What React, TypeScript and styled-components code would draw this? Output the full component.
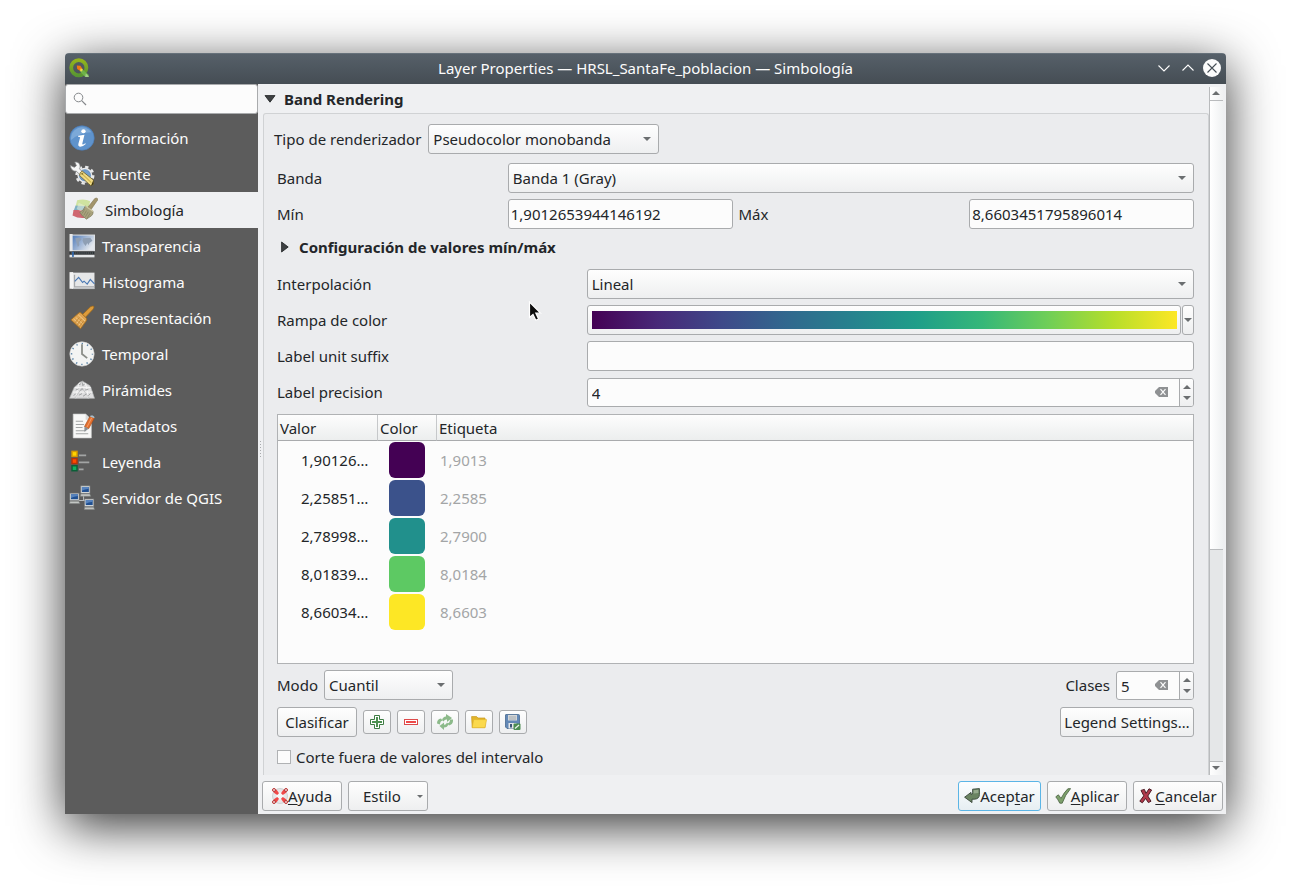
import React from 'react';
import styled, { createGlobalStyle, css } from 'styled-components';

const GlobalStyle = createGlobalStyle`
  *, *::before, *::after { box-sizing: border-box; }
  body { margin: 0; background: #ffffff; }
  body, button, input, select, table {
    font-family: 'Noto Sans', 'Open Sans', sans-serif;
    font-size: 15px;
    line-height: 20px;
    color: #232629;
  }
  button, input, select { margin: 0; padding: 0; }
`;

/* ---------- window frame ---------- */

const Desktop = styled.div`
  display: flex;
  min-height: 100vh;
  padding: 53px 65px 77px;
`;

const Dialog = styled.div`
  display: flex;
  flex: 1;
  flex-direction: column;
  min-width: 0;
  overflow: hidden;
  border-radius: 4px 4px 0 0;
  background: #eff0f2;
  box-shadow: 0 12px 50px rgba(0, 0, 0, 0.8);
`;

const TitleBar = styled.header`
  display: grid;
  grid-template-columns: 1fr auto 1fr;
  align-items: center;
  height: 31px;
  padding: 0 4px 2px;
  border-top: 1px solid #66717a;
  background: linear-gradient(#566069, #454d54);
`;

const Title = styled.h1`
  margin: 0;
  font-size: 15px;
  font-weight: 400;
  color: #fcfcfc;
`;

const WindowControls = styled.div`
  display: flex;
  justify-content: flex-end;
  gap: 4px;
`;

const WindowButton = styled.button`
  display: flex;
  border: 0;
  background: none;
`;

const Columns = styled.div`
  display: flex;
  flex: 1;
`;

/* ---------- side navigation ---------- */

const Sidebar = styled.nav`
  width: 193px;
  flex: none;
  background: #5c5c5c;
`;

const SearchBox = styled.label`
  display: flex;
  align-items: center;
  gap: 6px;
  height: 30px;
  padding: 0 7px;
  border: 1px solid #a9abad;
  border-radius: 3px;
  background: #fcfcfc;
`;

const SearchInput = styled.input`
  flex: 1;
  min-width: 0;
  border: 0;
  outline: 0;
  background: none;
`;

const NavList = styled.ul`
  margin: 0;
  padding: 6px 0;
  list-style: none;
`;

const NavLink = styled.a<{ $active?: boolean }>`
  display: flex;
  align-items: center;
  gap: 7px;
  height: 36px;
  padding: 0 4px;
  color: #fcfcfc;
  text-decoration: none;
  ${(p) =>
    p.$active &&
    css`
      padding: 0 7px;
      background: #eff0f2;
      color: #232629;
    `}
`;

/* ---------- main area ---------- */

const Splitter = styled.div`
  display: flex;
  flex: none;
  align-items: center;
  width: 5px;
  padding-left: 1px;
`;

const Main = styled.main`
  display: flex;
  flex: 1;
  flex-direction: column;
  min-width: 0;
  padding: 3px 3px 3px 0;
`;

const ScrollArea = styled.div`
  position: relative;
  display: flex;
  flex: 1;
`;

const Group = styled.section`
  display: flex;
  flex: 1;
  flex-direction: column;
  min-width: 0;
`;

const GroupHeader = styled.h2`
  display: flex;
  align-items: center;
  gap: 8px;
  height: 26px;
  margin: 0;
  padding-bottom: 2px;
  font-size: 15px;
  font-weight: 700;
`;

const GroupBody = styled.div`
  flex: 1;
  border: 1px solid #d0d2d4;
  border-bottom: 0;
  border-radius: 3px 3px 0 0;
  background: #ebecee;
`;

const RendererRow = styled.div`
  display: flex;
  align-items: center;
  gap: 7px;
  padding: 10px 10px 9px;
`;

const Form = styled.div`
  display: flex;
  flex-direction: column;
  gap: 6px;
  padding: 0 14px 0 13px;
`;

const QuarterRow = styled.div`
  display: grid;
  grid-template-columns: repeat(4, minmax(0, 1fr));
  align-items: center;
  gap: 6px;
`;

const ThirdRow = styled.div`
  display: grid;
  grid-template-columns: minmax(0, 1fr) minmax(0, 2fr);
  align-items: center;
  gap: 6px;
  min-height: 30px;
`;

const SubHeader = styled.h3`
  display: flex;
  align-items: center;
  gap: 8px;
  height: 28px;
  margin: 0;
  padding: 0 1px 4px;
  font-size: 15px;
  font-weight: 700;
`;

const Disclosure = styled.button`
  display: flex;
  align-items: center;
  justify-content: center;
  width: 13px;
  height: 20px;
  border: 0;
  background: none;
`;

/* ---------- controls ---------- */

const raised = css`
  border: 1px solid #a9abad;
  border-radius: 3px;
  background: linear-gradient(#fefefe, #eeeff0);
`;

const Combo = styled.span<{ $width?: number; $span?: number }>`
  position: relative;
  display: block;
  width: ${(p) => (p.$width ? `${p.$width}px` : 'auto')};
  grid-column: ${(p) => (p.$span ? `span ${p.$span}` : 'auto')};
`;

const Select = styled.select`
  ${raised}
  display: block;
  width: 100%;
  height: 30px;
  padding: 0 20px 0 4px;
  appearance: none;
`;

const ComboArrow = styled.span`
  position: absolute;
  top: 13px;
  right: 8px;
  display: flex;
  pointer-events: none;
`;

const TextInput = styled.input`
  width: 100%;
  height: 30px;
  padding: 0 2px;
  border: 1px solid #a9abad;
  border-radius: 3px;
  background: #fcfcfc;
`;

const RampControl = styled.div`
  display: flex;
  gap: 1px;
`;

const RampButton = styled.button`
  ${raised}
  display: flex;
  flex: 1;
  height: 30px;
  padding: 5px 3px 5px 4px;
`;

const RampPreview = styled.span`
  flex: 1;
  height: 18px;
  background: linear-gradient(
    to right,
    #440154, #482878, #3e4989, #31688e, #26828e,
    #1f9e89, #35b779, #6ece58, #b5de2b, #fde725
  );
`;

const RampMenu = styled.button`
  ${raised}
  display: flex;
  align-items: center;
  justify-content: center;
  width: 12px;
  height: 30px;
`;

const SpinFrame = styled.div<{ $width?: number }>`
  display: flex;
  align-items: center;
  align-self: end;
  width: ${(p) => (p.$width ? `${p.$width}px` : 'auto')};
  height: 29px;
  overflow: hidden;
  border: 1px solid #a9abad;
  border-radius: 3px;
  background: #fcfcfc;
`;

const SpinInput = styled.input`
  flex: 1;
  min-width: 0;
  padding-left: 4px;
  border: 0;
  outline: 0;
  background: none;
`;

const ClearButton = styled.button`
  display: flex;
  margin-right: 11px;
  padding-bottom: 2px;
  border: 0;
  background: none;
`;

const SpinSteps = styled.div`
  display: flex;
  flex-direction: column;
  width: 14px;
  height: 100%;
  padding: 2px 0 3px;
  border-left: 1px solid #a9abad;
  background: linear-gradient(#fefefe, #eeeff0);
`;

const StepButton = styled.button`
  display: flex;
  flex: 1;
  align-items: center;
  justify-content: center;
  border: 0;
  background: none;
`;

const PushButton = styled.button<{ $default?: boolean; $min?: number }>`
  ${raised}
  display: flex;
  align-items: center;
  justify-content: center;
  min-width: ${(p) => p.$min ?? 80}px;
  height: 30px;
  padding: 0 3px;
  white-space: nowrap;
  ${(p) =>
    p.$default &&
    css`
      border-color: #5bb5e6;
      background: linear-gradient(#fcfeff, #e6eef2);
    `}
  u {
    text-underline-offset: 2px;
    text-decoration-thickness: 1px;
    text-decoration-skip-ink: none;
  }
`;

const MenuButton = styled(PushButton)`
  justify-content: space-between;
  padding: 0 4px 0 14px;
`;

const ToolButton = styled.button`
  ${raised}
  display: flex;
  align-items: center;
  justify-content: center;
  width: 28px;
  height: 24px;
`;

/* ---------- class table ---------- */

const TableFrame = styled.div`
  min-height: 250px;
  margin-top: 1px;
  border: 1px solid #b0b2b4;
  background: #fcfcfc;
`;

const ClassTable = styled.table`
  width: 100%;
  border-spacing: 0;
  table-layout: fixed;
`;

const HeadCell = styled.th<{ $width?: number }>`
  width: ${(p) => (p.$width ? `${p.$width}px` : 'auto')};
  height: 26px;
  padding: 0 2px;
  border-right: 1px solid #c6c8ca;
  border-bottom: 1px solid #a9abad;
  background: linear-gradient(#fdfdfd, #eceeee);
  font-weight: 400;
  text-align: left;
  &:last-child { border-right: 0; }
`;

const Cell = styled.td<{ $kind: 'value' | 'color' | 'label' }>`
  height: 38px;
  padding: ${(p) => ({ value: '0 0 0 23px', color: '0 0 0 11px', label: '0 3px' })[p.$kind]};
  color: ${(p) => (p.$kind === 'label' ? '#a3a5a6' : '#232629')};
`;

const Swatch = styled.button<{ $color: string }>`
  display: block;
  width: 36px;
  height: 36px;
  border: 0;
  border-radius: 6px;
  background: ${(p) => p.$color};
`;

/* ---------- rows under the table ---------- */

const Toolbar = styled.div`
  display: flex;
  align-items: center;
  gap: 6px;
`;

const Spacer = styled.span`
  flex: 1;
`;

const Actions = styled.div`
  display: flex;
  flex-direction: column;
  gap: 7px;
`;

const CheckRow = styled.label`
  display: flex;
  align-items: center;
  gap: 5px;
  height: 28px;
`;

const Check = styled.input`
  width: 14px;
  height: 14px;
  border: 1px solid #b0b2b4;
  background: #fcfcfc;
  appearance: none;
`;

const Footer = styled.footer`
  display: flex;
  gap: 6px;
  padding-top: 6px;
  margin-left: -1px;
`;

/* ---------- scroll bar ---------- */

const ScrollBar = styled.div`
  display: flex;
  flex: none;
  flex-direction: column;
  width: 14px;
  border-left: 1px solid #b9bbbd;
  background: #e5e7e8;
`;

const ScrollStep = styled.button`
  display: flex;
  align-items: center;
  justify-content: center;
  height: 13px;
  padding: 0 1px 1px 0;
  border: 0;
  background: linear-gradient(to right, #fefefe, #f0f1f2);
`;

const ScrollTrack = styled.div`
  display: flex;
  flex: 1;
  flex-direction: column;
  border: solid #b9bbbd;
  border-width: 1px 0;
`;

const ScrollThumb = styled.div`
  flex: 0 0 68%;
  border-bottom: 1px solid #b9bbbd;
  background: linear-gradient(to right, #ffffff, #eff1f2);
`;

const Pointer = styled.div`
  position: absolute;
  top: 214px;
  left: 265px;
  display: flex;
  pointer-events: none;
`;

/* ---------- drawings ---------- */

type TriDir = 'up' | 'down';
const Tri = ({ dir, w = 8, h = 4 }: { dir: TriDir; w?: number; h?: number }) => (
  <svg width={w} height={h} viewBox="0 0 8 4" preserveAspectRatio="none">
    <path d={dir === 'down' ? 'M0 0H8L4 4Z' : 'M0 4H8L4 0Z'} fill="#6b6e70" />
  </svg>
);

const ClearIcon = () => (
  <svg width="13" height="10" viewBox="0 0 13 10">
    <path d="M4 0H13V10H4L0 6V4Z" fill="#8f9193" />
    <path d="M5.500 2.200L10.500 7.800M10.500 2.200L5.500 7.800" stroke="#fcfcfc" strokeWidth="1.200" />
  </svg>
);

const Logo = () => (
  <svg width="20" height="20" viewBox="0 0 20 20">
    <defs>
      <linearGradient id="lg" x1="0" y1="0" x2="0" y2="1">
        <stop offset="0" stopColor="#93b41c" />
        <stop offset="1" stopColor="#589632" />
      </linearGradient>
    </defs>
    <circle cx="9.800" cy="9.800" r="7.600" fill="none" stroke="url(#lg)" strokeWidth="3.800" />
    <path d="M12.400 10.400L19.600 16.800V19H16.200L10.600 13Z" fill="#6fb24a" />
    <path d="M16.800 15.600L19.600 18V19H16.200Z" fill="#a5cf8c" />
    <path d="M7.800 7.600L11.400 7.800L13.400 10.800L11.200 13L8.200 11Z" fill="#ee7913" />
    <path d="M11.400 10.400L13.800 11L13 13.400L11.200 13Z" fill="#f0d64a" />
  </svg>
);

const Icon = ({ children }: { children: React.ReactNode }) => (
  <svg width="26" height="26" viewBox="-0.500 -0.500 25 25">{children}</svg>
);

const InfoIcon = () => (
  <Icon>
    <circle cx="12" cy="12" r="11.800" fill="#5f93cc" stroke="#4a7db8" strokeWidth=".6" />
    <path d="M1.600 14A10.600 10.600 0 0 1 21 6.500Q10 6.500 1.600 14Z" fill="#86b0dc" opacity=".75" />
    <ellipse cx="13.400" cy="5.600" rx="2.100" ry="1.900" fill="#fff" />
    <path d="M8.200 9.800Q11.500 9.400 14.400 8.800L12.300 17.300Q12 18.600 13.500 18L15.300 17L15.600 17.700Q12.500 20.600 10 20.400Q7.900 20 8.600 17.300L10.200 11.600Q10.300 10.700 8.200 10.700Z" fill="#fff" />
  </Icon>
);

const SourceIcon = () => (
  <Icon>
    <circle cx="14.800" cy="13.200" r="7.200" fill="#e8e9ea" />
    <circle cx="14.800" cy="13.200" r="8" fill="none" stroke="#e8e9ea" strokeWidth="2.400" strokeDasharray="3.200 3.080" />
    <circle cx="14.800" cy="13.200" r="5.400" fill="#6f9dce" stroke="#4f7fb2" strokeWidth=".6" />
    <path d="M.6 3.600L4.600 5.600L6.600 4L5 .4Q9.600 0 10.200 4.400Q10.200 6 9.600 7L12.400 10L9.800 12.400L6.600 9.400Q1.600 9.800 .6 3.600Z" fill="#f6f7f7" stroke="#7d8082" strokeWidth=".7" />
    <path d="M12.200 9.200L23 17.800V22L20.600 23.400L9.800 13.600Q9.400 10.200 12.200 9.200Z" fill="#efdb86" stroke="#6e6230" strokeWidth=".8" />
    <path d="M12.400 12.200L21 20.200" stroke="#cdb24a" strokeWidth="1" />
    <path d="M23 17.800L20.600 23.400L23 22Z" fill="#3c3415" />
    <circle cx="12.200" cy="11.800" r="1" fill="#8a7934" />
  </Icon>
);

const SymbologyIcon = () => (
  <Icon>
    <path d="M4.400 2.600Q12 1 17 3.600L15 11L2.800 9Z" fill="#cfe3a0" />
    <path d="M3 7.600L14.500 8.600L11 15L1 13Z" fill="#7fb0c4" />
    <path d="M1 12L9 12L13 19.400Q6 20.600 0 17.200Z" fill="#cf6670" />
    <path d="M6 5L12 8L9 14L4 11Z" fill="#e6efdc" opacity=".55" />
    <path d="M14.600 9.600L21.400 1Q23 0 24.200 1.200Q24.600 2.600 23 4L17.600 11.800Z" fill="#a3956c" stroke="#857957" strokeWidth=".6" />
    <path d="M12.400 8.200L19.800 13.400Q20 16 18.200 17.600L13.400 20.800Q9 18 7 14.200Q10.600 12.800 12.400 8.200Z" fill="#a8a27c" stroke="#7f7a5c" strokeWidth=".7" />
    <path d="M11.600 11.400L9.200 15.400M13.400 12.600L10.800 17.200M15.200 13.800L12.400 18.600M17 15L14.200 19.600" stroke="#857f60" strokeWidth=".7" />
    <path d="M12.400 8.200L19.800 13.400" stroke="#d3cba6" strokeWidth="1" />
  </Icon>
);

const TransparencyIcon = () => (
  <Icon>
    <defs>
      <linearGradient id="tr" x1="0" y1="0" x2="1" y2=".5">
        <stop offset="0" stopColor="#4472b4" />
        <stop offset="1" stopColor="#e4e8ee" />
      </linearGradient>
    </defs>
    <rect x="1" y="1.500" width="23" height="15" fill="url(#tr)" stroke="#dfe2e5" strokeWidth="1" />
    <path d="M5.500 4.500L10 4L11.500 6L9 8L9.500 11L8 13L6.800 9ZM13 4.500L20 4L22 7L19 9L18.500 11L17 9L15.500 12L13.600 9.500L12.500 7Z" fill="#8f9fb4" />
    <path d="M0 .5H3V17H0Z" fill="#e9eaeb" />
    <rect x="0" y="17.400" width="24" height="2.600" fill="#2e3336" />
    <path d="M1.500 18.700H24" stroke="#6c7174" strokeWidth="1" strokeDasharray="1 1" />
    <rect x="0" y="20.500" width="24" height="2.400" fill="#e4e6e8" />
    <rect x="2.500" y="17.500" width="1.600" height="5" fill="#2f67ad" />
  </Icon>
);

const HistogramIcon = () => (
  <Icon>
    <rect x="2" y="3" width="22" height="15.500" fill="#e6e7e8" />
    <path d="M0 2.500H3.500V18.500H0Z" fill="#f4f4f4" />
    <path d="M4.800 5V16.800H24" fill="none" stroke="#a5a8aa" strokeWidth="1.200" />
    <path d="M5 11.500L8.800 7.500L12.600 12.500L14 11.200L17 14L20 9.600L24 13.800" fill="none" stroke="#4b79b4" strokeWidth="1.100" />
    <path d="M3.500 18.300H24" stroke="#bfc2c4" />
  </Icon>
);

const BrushIcon = () => (
  <Icon>
    <path d="M12.500 8.600L20.200 1.200Q22 .2 23.400 .8Q23.800 2.400 22.600 3.600L15.200 11.400Z" fill="#dc9b3c" stroke="#9c6718" strokeWidth=".7" />
    <path d="M9.400 6.800Q11 6.600 12 8L15.600 11.400Q17.200 12.800 16.200 14.600L10.600 22.400L1.400 13.800Z" fill="#dfa452" stroke="#a26b1d" strokeWidth=".8" />
    <path d="M8.400 9L15 15M4 13L11 19.500M6 11.500L13 18" stroke="#f0cf95" strokeWidth=".8" />
    <path d="M9.500 11.500L5.500 16.500M11.500 13L7.500 18.500M13.500 15L9.500 20.500" stroke="#b97f2c" strokeWidth=".7" />
  </Icon>
);

const ClockIcon = () => (
  <Icon>
    <circle cx="12" cy="12" r="11.700" fill="#f3f4f3" stroke="#d2d4d3" strokeWidth=".6" />
    <circle cx="12" cy="12" r="10" fill="none" stroke="#5b84a8" strokeWidth="1.400" strokeDasharray="1.300 3.936" strokeDashoffset=".65" />
    <path d="M12 2.600V12L17 16" fill="none" stroke="#8a8d87" strokeWidth="1.700" />
  </Icon>
);

const PyramidsIcon = () => (
  <Icon>
    <path d="M4.500 9.500L10 4.500L12.500 3.500L15 5L19 7.500L20.500 9.500L24 20H0Z" fill="#dededf" stroke="#b7b9ba" strokeWidth=".6" />
    <path d="M5 9.500H20.500M3 14H22M9.500 5L8 9.500L6 20M15 5.500L16.500 9.500L18 20" fill="none" stroke="#f7f7f7" strokeWidth=".9" />
    <path d="M9 7L11 6M12.500 7.500L14.500 6.500M6 12L8.500 11M10 12.500L13 11M15 12L18 11.500M4 17.500L6 15.500M9 17L12 15.500M13 18L16 16M18 17.500L20 15.500M12 4.500L13 8" stroke="#9b9e9f" strokeWidth=".9" fill="none" />
    <path d="M12 10L5 20H19Z" fill="none" stroke="#b0b2b3" strokeWidth=".6" />
  </Icon>
);

const MetadataIcon = () => (
  <Icon>
    <path d="M3.500 .5H15.500L21 6V23.500H3.500Z" fill="#f8f8f7" stroke="#c9cbcb" strokeWidth=".6" />
    <path d="M15.500 .5V6H21Z" fill="#d9dada" />
    <path d="M6 7.500H13M6 10.500H14M6 13.500H12.500M6 16.500H16M6 19.500H18" stroke="#a3a5a5" strokeWidth="1" />
    <path d="M19.600 2.800L23.800 4.600L18.400 14.600L14.400 12.600Z" fill="#e3702f" stroke="#a84a16" strokeWidth=".6" />
    <path d="M21.500 3.800L16.600 13.400" stroke="#f6a16c" strokeWidth=".9" />
    <path d="M14.400 12.600L18.400 14.600L14.200 17.600Z" fill="#8a8f94" />
    <path d="M20.400 1.800L22.400 2L24 3.400L23.800 4.600L19.600 2.800Z" fill="#a9c1cf" />
  </Icon>
);

const LegendIcon = () => (
  <Icon>
    <rect x="2.400" y="1.800" width="4.800" height="4.800" fill="#ffd400" stroke="#d89a00" strokeWidth="1.400" />
    <rect x="2.400" y="8.700" width="4.800" height="4.800" fill="#ff4a00" stroke="#b33208" strokeWidth="1.400" />
    <rect x="2.400" y="15.600" width="4.800" height="4.800" fill="#10b060" stroke="#0b5f38" strokeWidth="1.400" />
    <path d="M9 5.600H16M9 12.400H19M9 19.200H13.500" stroke="#a2a4a4" strokeWidth="1.700" />
  </Icon>
);

const Computer = ({ x, y }: { x: number; y: number }) => (
  <g transform={`translate(${x} ${y})`}>
    <rect x=".4" y=".4" width="8.700" height="7" fill="#dcdedd" stroke="#85888a" strokeWidth=".6" />
    <rect x="1.400" y="1.400" width="6.700" height="4.800" fill="#1f4f91" />
    <path d="M1.400 1.400H8.100V3Q4 3.400 1.400 5Z" fill="#5783bd" />
    <path d="M.4 8.200H9L9.800 10.400H0Z" fill="#c3c6c4" stroke="#808382" strokeWidth=".5" />
  </g>
);

const ServerIcon = () => (
  <Icon>
    <path d="M9 14.500H16M13.500 10V15" stroke="#b9bcbc" strokeWidth="1" />
    <Computer x={10.5} y={0} />
    <Computer x={0} y={7} />
    <Computer x={14.2} y={12.6} />
  </Icon>
);

const PlusIcon = () => (
  <svg width="14" height="14" viewBox="0 0 14 14">
    <path d="M4.500 .5H9.500V4.500H13.500V9.500H9.500V13.500H4.500V9.500H.5V4.500H4.500Z" fill="#fff" stroke="#3f7d45" strokeWidth="1" />
    <path d="M7 2V12M2 7H12" stroke="#4c9150" strokeWidth="2" />
  </svg>
);

const MinusIcon = () => (
  <svg width="14" height="14" viewBox="0 0 14 14">
    <rect x=".5" y="4.500" width="13" height="5" fill="#fff" stroke="#dd4a4a" />
    <rect x="2" y="6" width="10" height="2" fill="#ee4a4a" />
  </svg>
);

const RefreshIcon = () => (
  <svg width="16" height="16" viewBox="0 0 16 16" fill="#8cba8a">
    <path d="M7 13.500V16L2.500 12L7 8.500V10.800Q9 11 10 8.500L11.500 10Q10.500 13.500 7 13.500Z" />
    <path d="M9 2.500V0L15 4L10 8V5.500Q8 5 6.500 7.500L5 6Q6 2.500 9 2.500Z" />
    <path d="M0 9.500Q0 5 4 4.500L5.500 6.500Q3 7 3 10.500Z" />
    <path d="M16 5.500Q16.400 10.500 12 11.500L10.500 9.500Q13 9 13 5.500Z" />
  </svg>
);

const FolderIcon = () => (
  <svg width="16" height="14" viewBox="0 0 16 14">
    <path d="M.6 1.600H5.600L7 3H14V12.500H1.200Z" fill="#e3b62c" stroke="#c99a1c" strokeWidth=".7" />
    <path d="M2.600 4.600H15.600L14 12.800H1.200Z" fill="#fbd94c" stroke="#dcb02a" strokeWidth=".6" />
  </svg>
);

const SaveIcon = () => (
  <svg width="16" height="16" viewBox="0 0 16 16">
    <path d="M.5 1Q.5 .5 1 .5H13.500Q14.500 .5 14.500 1.500V14.500H2L.5 13Z" fill="#6388b6" stroke="#48698f" strokeWidth=".8" />
    <rect x="3" y="1" width="9" height="5.500" fill="#d4d7d9" />
    <path d="M4 3H11M4 5H11" stroke="#9da1a4" strokeWidth=".8" />
    <rect x="3.500" y="9" width="8" height="5.500" fill="#e5e8ea" />
    <rect x="5" y="10" width="2" height="3.500" fill="#3c5678" />
    <rect x="8.500" y="9.500" width="7" height="6.500" rx="1" fill="#4b8c50" />
    <path d="M10 14.500L14 11" stroke="#eaf5ea" strokeWidth="1.300" />
  </svg>
);

const HelpIcon = () => (
  <svg width="16" height="16" viewBox="0 0 16 16">
    <circle cx="8" cy="8" r="5.600" fill="none" stroke="#e6e7e9" strokeWidth="4" />
    <circle cx="8" cy="8" r="7.500" fill="none" stroke="#c2c4c6" strokeWidth=".7" />
    <path d="M4.500 1.500L7 5.200L5.200 7L1.500 4.500ZM11.500 1.500L14.500 4.500L10.800 7L9 5.200ZM1.500 11.500L5.200 9L7 10.800L4.500 14.500ZM14.500 11.500L11.500 14.500L9 10.800L10.800 9Z" fill="#f04848" />
    <g fill="#f3dede" stroke="#b52f2f" strokeWidth="1">
      <circle cx="2" cy="2" r="1.500" />
      <circle cx="14" cy="2" r="1.500" />
      <circle cx="2" cy="14" r="1.500" />
      <circle cx="14" cy="14" r="1.500" />
    </g>
  </svg>
);

const AcceptIcon = () => (
  <svg width="16" height="16" viewBox="0 0 16 16">
    <path d="M8.600 1.200L15.400 .6V6.600Q15.400 10.800 10.600 11.200H8V14.600L.6 9.200L7 4.400V6.400Q8.800 6.400 8.600 4.600Z" fill="#6a8462" stroke="#39473a" strokeWidth=".9" />
    <path d="M9.600 2.200L14.400 1.800V5L9.600 5.600Z" fill="#a8bba0" opacity=".7" />
  </svg>
);

const ApplyIcon = () => (
  <svg width="16" height="16" viewBox="0 0 16 16">
    <path d="M.8 8.800L3.400 6.800L6 10.400Q9 4.500 12.800 .8L15.600 .6Q10 7 7.200 15.200H4.800Q3 11.500 .8 8.800Z" fill="#7da06c" stroke="#48603f" strokeWidth=".8" />
  </svg>
);

const CancelIcon = () => (
  <svg width="16" height="16" viewBox="0 0 16 16">
    <path d="M2 2.400L5.400 1.400L7 5.400L10 .8L12.600 2L8.800 8L12 13.200L9.400 14.600L6.600 10.400L3.400 14.800L.8 13.200L4.800 7.800Z" fill="#b13a4c" stroke="#4f1d26" strokeWidth="1" />
  </svg>
);

/* ---------- data ---------- */

const sections = [
  { name: 'Información', Picture: InfoIcon },
  { name: 'Fuente', Picture: SourceIcon },
  { name: 'Simbología', Picture: SymbologyIcon, active: true },
  { name: 'Transparencia', Picture: TransparencyIcon },
  { name: 'Histograma', Picture: HistogramIcon },
  { name: 'Representación', Picture: BrushIcon },
  { name: 'Temporal', Picture: ClockIcon },
  { name: 'Pirámides', Picture: PyramidsIcon },
  { name: 'Metadatos', Picture: MetadataIcon },
  { name: 'Leyenda', Picture: LegendIcon },
  { name: 'Servidor de QGIS', Picture: ServerIcon },
];

const classes = [
  { value: '1,90126…', color: '#440154', label: '1,9013' },
  { value: '2,25851…', color: '#3b528b', label: '2,2585' },
  { value: '2,78998…', color: '#21908c', label: '2,7900' },
  { value: '8,01839…', color: '#5dc963', label: '8,0184' },
  { value: '8,66034…', color: '#fde725', label: '8,6603' },
];

const ComboBox = ({ id, value, width, span }: { id: string; value: string; width?: number; span?: number }) => (
  <Combo $width={width} $span={span}>
    <Select id={id} defaultValue={value}>
      <option>{value}</option>
    </Select>
    <ComboArrow>
      <Tri dir="down" />
    </ComboArrow>
  </Combo>
);

const SpinBox = ({ id, value, width }: { id: string; value: string; width?: number }) => (
  <SpinFrame $width={width}>
    <SpinInput id={id} defaultValue={value} inputMode="numeric" />
    <ClearButton aria-label="Borrar">
      <ClearIcon />
    </ClearButton>
    <SpinSteps>
      <StepButton aria-label="Aumentar">
        <Tri dir="up" />
      </StepButton>
      <StepButton aria-label="Disminuir">
        <Tri dir="down" />
      </StepButton>
    </SpinSteps>
  </SpinFrame>
);

export default function App() {
  return (
    <>
      <GlobalStyle />
      <Desktop>
        <Dialog>
          <TitleBar>
            <Logo />
            <Title>Layer Properties — HRSL_SantaFe_poblacion — Simbología</Title>
            <WindowControls>
              <WindowButton aria-label="Minimizar">
                <svg width="20" height="20" viewBox="0 0 20 20">
                  <path d="M4.500 7.500L10 13L15.500 7.500" fill="none" stroke="#fcfcfc" strokeWidth="1.100" />
                </svg>
              </WindowButton>
              <WindowButton aria-label="Maximizar">
                <svg width="20" height="20" viewBox="0 0 20 20">
                  <path d="M4.500 12.500L10 7L15.500 12.500" fill="none" stroke="#fcfcfc" strokeWidth="1.100" />
                </svg>
              </WindowButton>
              <WindowButton aria-label="Cerrar">
                <svg width="20" height="20" viewBox="0 0 20 20">
                  <circle cx="10" cy="10" r="9" fill="#fcfcfc" />
                  <path d="M5.500 5.500L14.500 14.500M14.500 5.500L5.500 14.500" stroke="#475057" strokeWidth="1.100" />
                </svg>
              </WindowButton>
            </WindowControls>
          </TitleBar>
          <Columns>
            <Sidebar>
              <SearchBox>
                <svg width="14" height="14" viewBox="0 0 14 14" fill="none" stroke="#85888b">
                  <circle cx="5.500" cy="5.500" r="4.300" />
                  <path d="M8.700 8.700L13 13" strokeWidth="1.200" />
                </svg>
                <SearchInput type="text" aria-label="Buscar" />
              </SearchBox>
              <NavList>
                {sections.map(({ name, Picture, active }) => (
                  <li key={name}>
                    <NavLink href="#" $active={active}>
                      <Picture />
                      {name}
                    </NavLink>
                  </li>
                ))}
              </NavList>
            </Sidebar>
            <Splitter>
              <svg width="3" height="17" viewBox="0 0 3 17">
                <path d="M1.500 0V17" stroke="#a9abad" strokeDasharray="1 2" />
              </svg>
            </Splitter>
            <Main>
              <ScrollArea>
                <Group>
                  <GroupHeader>
                    <Disclosure aria-label="Contraer">
                      <svg width="12" height="8" viewBox="0 0 12 8">
                        <path d="M1 .6H11L6 7.200Z" fill="#3e4143" stroke="#1b1e20" strokeWidth=".8" />
                      </svg>
                    </Disclosure>
                    Band Rendering
                  </GroupHeader>
                  <GroupBody>
                    <RendererRow>
                      <label htmlFor="renderer">Tipo de renderizador</label>
                      <ComboBox id="renderer" value="Pseudocolor monobanda" width={231} />
                    </RendererRow>
                    <Form>
                      <QuarterRow>
                        <label htmlFor="band">Banda</label>
                        <ComboBox id="band" value="Banda 1 (Gray)" span={3} />
                      </QuarterRow>
                      <QuarterRow>
                        <label htmlFor="min">Mín</label>
                        <TextInput id="min" defaultValue="1,9012653944146192" />
                        <label htmlFor="max">Máx</label>
                        <TextInput id="max" defaultValue="8,6603451795896014" />
                      </QuarterRow>
                      <SubHeader>
                        <Disclosure aria-label="Expandir">
                          <svg width="8" height="12" viewBox="0 0 8 12">
                            <path d="M.6 1V11L7.200 6Z" fill="#3e4143" stroke="#1b1e20" strokeWidth=".8" />
                          </svg>
                        </Disclosure>
                        Configuración de valores mín/máx
                      </SubHeader>
                      <ThirdRow>
                        <label htmlFor="interp">Interpolación</label>
                        <ComboBox id="interp" value="Lineal" />
                      </ThirdRow>
                      <ThirdRow>
                        <label htmlFor="ramp">Rampa de color</label>
                        <RampControl>
                          <RampButton id="ramp">
                            <RampPreview />
                          </RampButton>
                          <RampMenu aria-label="Rampas">
                            <Tri dir="down" />
                          </RampMenu>
                        </RampControl>
                      </ThirdRow>
                      <ThirdRow>
                        <label htmlFor="suffix">Label unit suffix</label>
                        <TextInput id="suffix" />
                      </ThirdRow>
                      <ThirdRow>
                        <label htmlFor="precision">Label precision</label>
                        <SpinBox id="precision" value="4" />
                      </ThirdRow>
                      <TableFrame>
                        <ClassTable>
                          <thead>
                            <tr>
                              <HeadCell $width={100}>Valor</HeadCell>
                              <HeadCell $width={59}>Color</HeadCell>
                              <HeadCell>Etiqueta</HeadCell>
                            </tr>
                          </thead>
                          <tbody>
                            {classes.map((c) => (
                              <tr key={c.color}>
                                <Cell $kind="value">{c.value}</Cell>
                                <Cell $kind="color">
                                  <Swatch $color={c.color} aria-label={c.color} />
                                </Cell>
                                <Cell $kind="label">{c.label}</Cell>
                              </tr>
                            ))}
                          </tbody>
                        </ClassTable>
                      </TableFrame>
                      <Actions>
                        <Toolbar>
                          <label htmlFor="mode">Modo</label>
                          <ComboBox id="mode" value="Cuantil" width={129} />
                          <Spacer />
                          <label htmlFor="count">Clases</label>
                          <SpinBox id="count" value="5" width={78} />
                        </Toolbar>
                        <Toolbar>
                          <PushButton>Clasificar</PushButton>
                          <ToolButton aria-label="Añadir"><PlusIcon /></ToolButton>
                          <ToolButton aria-label="Quitar"><MinusIcon /></ToolButton>
                          <ToolButton aria-label="Recargar"><RefreshIcon /></ToolButton>
                          <ToolButton aria-label="Abrir"><FolderIcon /></ToolButton>
                          <ToolButton aria-label="Guardar"><SaveIcon /></ToolButton>
                          <Spacer />
                          <PushButton $min={134}>Legend Settings…</PushButton>
                        </Toolbar>
                      </Actions>
                      <CheckRow>
                        <Check type="checkbox" />
                        Corte fuera de valores del intervalo
                      </CheckRow>
                    </Form>
                  </GroupBody>
                </Group>
                <ScrollBar>
                  <ScrollStep aria-label="Subir"><Tri dir="up" /></ScrollStep>
                  <ScrollTrack>
                    <ScrollThumb />
                  </ScrollTrack>
                  <ScrollStep aria-label="Bajar"><Tri dir="down" /></ScrollStep>
                </ScrollBar>
                <Pointer>
                  <svg width="14" height="22" viewBox="0 0 14 22">
                    <path d="M1.500 1V16.500L5 13.400L7.800 19.200L10.600 18L7.800 12.200H12.500Z" fill="#0c0c0c" stroke="#fff" strokeWidth="1.200" />
                  </svg>
                </Pointer>
              </ScrollArea>
              <Footer>
                <PushButton><HelpIcon /><span><u>A</u>yuda</span></PushButton>
                <MenuButton>Estilo<Tri dir="down" w={6} h={3} /></MenuButton>
                <Spacer />
                <PushButton $default $min={83}><AcceptIcon /><span>Acep<u>t</u>ar</span></PushButton>
                <PushButton><ApplyIcon /><span><u>A</u>plicar</span></PushButton>
                <PushButton $min={90}><CancelIcon /><span><u>C</u>ancelar</span></PushButton>
              </Footer>
            </Main>
          </Columns>
        </Dialog>
      </Desktop>
    </>
  );
}
